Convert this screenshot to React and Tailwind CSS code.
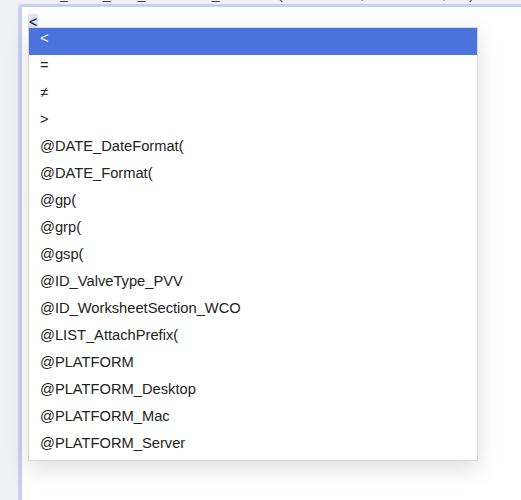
import React from "react";

const items = [
  "<",
  "=",
  "≠",
  ">",
  "@DATE_DateFormat(",
  "@DATE_Format(",
  "@gp(",
  "@grp(",
  "@gsp(",
  "@ID_ValveType_PVV",
  "@ID_WorksheetSection_WCO",
  "@LIST_AttachPrefix(",
  "@PLATFORM",
  "@PLATFORM_Desktop",
  "@PLATFORM_Mac",
  "@PLATFORM_Server",
];

const App = () => {
  return (
    <div
      className="relative w-[521px] h-[500px] overflow-hidden bg-[#f0f1f5] flex flex-col"
      style={{ fontFamily: '"Liberation Sans", Arial, sans-serif' }}
    >
      {/* bottom edge of the line above, scrolled out of view */}
      <div className="h-[4px] overflow-hidden flex items-end pl-[60px]">
        <div className="text-[14px] leading-[16px] -translate-y-[2px] text-[#444] whitespace-pre">
          {"_         _       _                 _               (                    ,                    ,      )"}
        </div>
      </div>

      <div className="ml-[18px] flex-1 bg-white border-l-[4px] border-t-[3px] border-[#c6d0f4] rounded-tl-[4px] pl-[6px] pt-[3px]">
        <span className="inline-block bg-[#dbe3f9] text-[14px] leading-[16px] px-[1px] text-black">
          &lt;
        </span>
      </div>

      <ul className="absolute left-[28px] top-[27px] w-[450px] bg-white border border-[#d6d6d6] shadow-[0_8px_22px_rgba(0,0,0,0.13)]">
        {items.map((item, i) => (
          <li
            key={item}
            className={
              i === 0
                ? "h-[27px] flex items-center pb-[7px] pl-[11px] text-[14.7px] bg-[#4a73db] text-white"
                : "h-[27px] flex items-center pb-[7px] pl-[11px] text-[14.7px] text-[#222]"
            }
          >
            {item}
          </li>
        ))}
      </ul>
    </div>
  );
};

export default App;
